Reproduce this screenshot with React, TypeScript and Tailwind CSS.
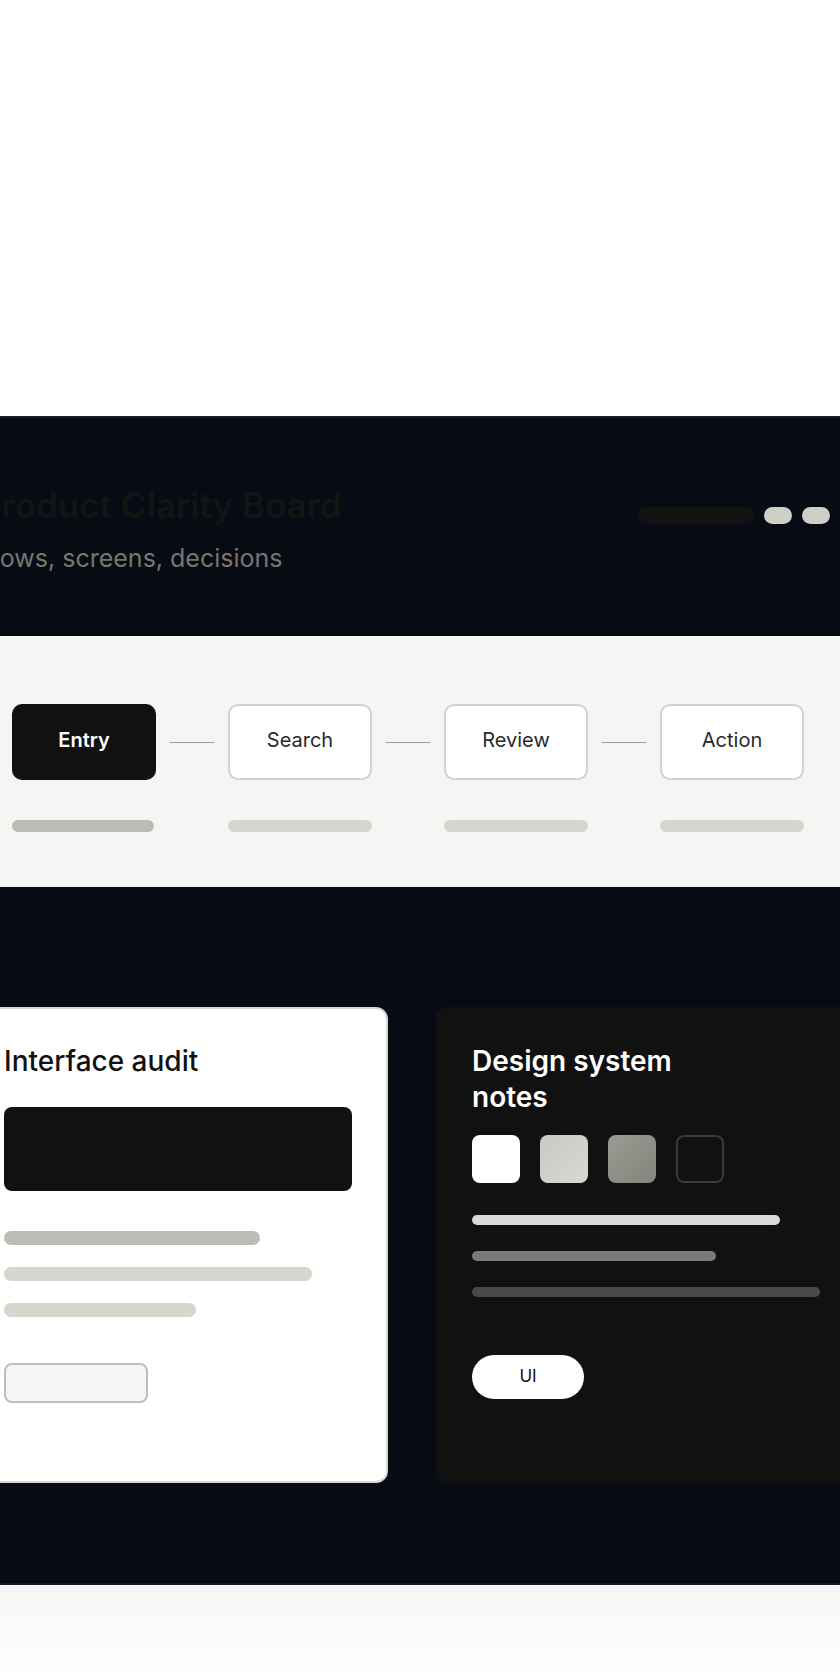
import React from "react";

const font = { fontFamily: "Inter, 'Noto Sans', sans-serif" };

function Step({ label, active }: { label: string; active?: boolean }) {
  return (
    <div className="flex w-[144px] shrink-0 flex-col gap-[40px]">
      <div
        className={
          active
            ? "flex h-[76px] items-center justify-center rounded-[10px] bg-[#111111] pb-[4px] text-[20px] font-semibold text-white"
            : "flex h-[76px] items-center justify-center rounded-[10px] border-2 border-[#d2d2d0] bg-white pb-[4px] text-[20px] font-normal text-[#2a2a2a]"
        }
      >
        {label}
      </div>
      <div
        className={
          active
            ? "h-[12px] w-[142px] rounded-full bg-[#bdbcb4]"
            : "h-[12px] w-[144px] rounded-full bg-[#d7d6ce]"
        }
      />
    </div>
  );
}

function Connector() {
  return (
    <div className="flex h-[76px] w-[72px] shrink-0 items-center justify-center pt-[1px]">
      <div className="h-px w-[44px] bg-[#9a9a98]" />
    </div>
  );
}

export default function App() {
  return (
    <div className="min-h-[1680px] w-full overflow-hidden bg-white" style={font}>
      <div className="h-[416px] bg-white" />
      <div className="border-y-2 border-[#141a2a] bg-[#070b13]">
        {/* header */}
        <div className="flex h-[218px] items-start justify-between pr-[10px] pt-[66px]">
          <div className="-ml-[21px] flex flex-col gap-[16px]">
            <h1 className="whitespace-nowrap text-[35px] font-semibold leading-[42px] text-[#141414]">
              Product Clarity Board
            </h1>
            <p className="whitespace-nowrap text-[25px] leading-[32px] text-[#77766f]">
              Flows, screens, decisions
            </p>
          </div>
          <div className="mt-[23px] flex items-center gap-[10px]">
            <div className="h-[17px] w-[116px] rounded-full bg-[#121212]" />
            <div className="h-[17px] w-[28px] rounded-full bg-[#cfcfc7]" />
            <div className="h-[17px] w-[28px] rounded-full bg-[#cfcfc7]" />
          </div>
        </div>

        {/* steps band */}
        <div className="flex h-[251px] items-start bg-[#f5f5f3] pl-[12px] pt-[68px]">
          <Step label="Entry" active />
          <Connector />
          <Step label="Search" />
          <Connector />
          <Step label="Review" />
          <Connector />
          <Step label="Action" />
        </div>

        {/* cards */}
        <div className="-ml-[32px] grid w-[888px] grid-cols-2 gap-[48px] pb-[100px] pt-[120px]">
          <div className="flex min-h-[474px] flex-col rounded-[12px] border-2 border-[#d6d6d4] bg-white px-[34px] pt-[34px]">
            <h2 className="whitespace-nowrap text-[28px] font-medium leading-[36px] text-[#111111]">
              Interface audit
            </h2>
            <div className="mt-[28px] h-[84px] w-[348px] rounded-[8px] bg-[#111111]" />
            <div className="mt-[40px] flex flex-col gap-[22px]">
              <div className="h-[14px] w-[256px] rounded-full bg-[#bdbcb5]" />
              <div className="h-[14px] w-[308px] rounded-full bg-[#d7d6ce]" />
              <div className="h-[14px] w-[192px] rounded-full bg-[#d7d6ce]" />
            </div>
            <div className="mt-[46px] h-[40px] w-[144px] rounded-[8px] border-2 border-[#bdbdbb] bg-[#f6f6f4]" />
          </div>

          <div className="flex min-h-[476px] flex-col rounded-[12px] bg-[#111111] px-[36px] pt-[36px]">
            <h2 className="max-w-[250px] text-[28px] font-semibold leading-[36px] text-white">
              Design system notes
            </h2>
            <div className="mt-[20px] flex gap-[20px]">
              <div className="h-[48px] w-[48px] rounded-[8px] bg-white" />
              <div className="h-[48px] w-[48px] rounded-[8px] bg-gradient-to-br from-[#c9c9c3] to-[#d8d8d4]" />
              <div className="h-[48px] w-[48px] rounded-[8px] bg-gradient-to-br from-[#9b9a93] to-[#84837c]" />
              <div className="h-[48px] w-[48px] rounded-[8px] border-2 border-[#3a3a3a]" />
            </div>
            <div className="mt-[32px] flex flex-col gap-[26px]">
              <div className="h-[10px] w-[308px] rounded-full bg-[#d9d9d9]" />
              <div className="h-[10px] w-[244px] rounded-full bg-[#7a7a7a]" />
              <div className="h-[10px] w-[348px] rounded-full bg-[#4a4a4a]" />
            </div>
            <div className="mt-[58px] flex h-[44px] w-[112px] items-center justify-center rounded-full bg-white text-[17px] text-[#111111]">
              UI
            </div>
          </div>
        </div>
      </div>
      <div className="h-[96px] bg-gradient-to-b from-[#f6f6f6] to-white" />
    </div>
  );
}
